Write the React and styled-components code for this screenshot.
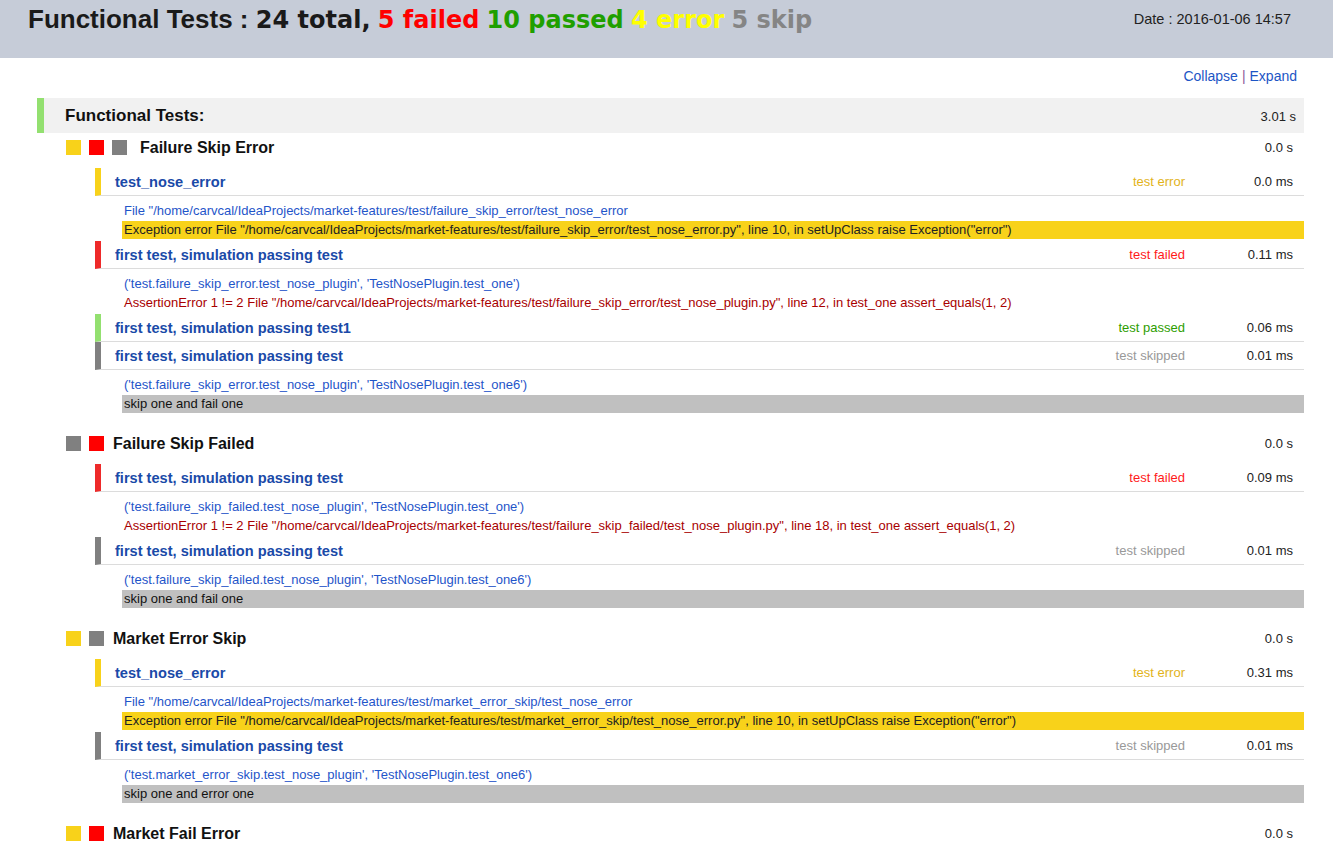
import React from 'react';
import styled, { createGlobalStyle } from 'styled-components';

const GlobalStyle = createGlobalStyle`
  html, body {
    margin: 0;
    padding: 0;
    background: #fff;
    overflow: hidden;
  }
  body {
    font-family: "Liberation Sans", Arial, sans-serif;
    color: #222;
  }
`;

const COLORS = {
  error: '#f8d21a',
  failed: '#ff0000',
  skip: '#808080',
  passed: '#93e070',
};

const BAR = {
  error: '#f8d21a',
  failed: '#ee2a2a',
  skipped: '#808080',
  passed: '#93e070',
};

const STATUS_TEXT = {
  error: '#e2b31a',
  failed: '#ff1a1a',
  passed: '#2e9e00',
  skipped: '#999999',
};

const groups = [
  {
    name: 'Failure Skip Error',
    marks: ['error', 'failed', 'skip'],
    time: '0.0 s',
    tests: [
      {
        name: 'test_nose_error',
        status: 'error',
        time: '0.0 ms',
        lines: [
          { kind: 'info', text: 'File "/home/carvcal/IdeaProjects/market-features/test/failure_skip_error/test_nose_error' },
          { kind: 'error', text: 'Exception error File "/home/carvcal/IdeaProjects/market-features/test/failure_skip_error/test_nose_error.py", line 10, in setUpClass raise Exception("error")' },
        ],
      },
      {
        name: 'first test, simulation passing test',
        status: 'failed',
        time: '0.11 ms',
        lines: [
          { kind: 'info', text: "('test.failure_skip_error.test_nose_plugin', 'TestNosePlugin.test_one')" },
          { kind: 'failed', text: 'AssertionError 1 != 2 File "/home/carvcal/IdeaProjects/market-features/test/failure_skip_error/test_nose_plugin.py", line 12, in test_one assert_equals(1, 2)' },
        ],
      },
      { name: 'first test, simulation passing test1', status: 'passed', time: '0.06 ms' },
      {
        name: 'first test, simulation passing test',
        status: 'skipped',
        time: '0.01 ms',
        lines: [
          { kind: 'info', text: "('test.failure_skip_error.test_nose_plugin', 'TestNosePlugin.test_one6')" },
          { kind: 'skip', text: 'skip one and fail one' },
        ],
      },
    ],
  },
  {
    name: 'Failure Skip Failed',
    marks: ['skip', 'failed'],
    time: '0.0 s',
    tests: [
      {
        name: 'first test, simulation passing test',
        status: 'failed',
        time: '0.09 ms',
        lines: [
          { kind: 'info', text: "('test.failure_skip_failed.test_nose_plugin', 'TestNosePlugin.test_one')" },
          { kind: 'failed', text: 'AssertionError 1 != 2 File "/home/carvcal/IdeaProjects/market-features/test/failure_skip_failed/test_nose_plugin.py", line 18, in test_one assert_equals(1, 2)' },
        ],
      },
      {
        name: 'first test, simulation passing test',
        status: 'skipped',
        time: '0.01 ms',
        lines: [
          { kind: 'info', text: "('test.failure_skip_failed.test_nose_plugin', 'TestNosePlugin.test_one6')" },
          { kind: 'skip', text: 'skip one and fail one' },
        ],
      },
    ],
  },
  {
    name: 'Market Error Skip',
    marks: ['error', 'skip'],
    time: '0.0 s',
    tests: [
      {
        name: 'test_nose_error',
        status: 'error',
        time: '0.31 ms',
        lines: [
          { kind: 'info', text: 'File "/home/carvcal/IdeaProjects/market-features/test/market_error_skip/test_nose_error' },
          { kind: 'error', text: 'Exception error File "/home/carvcal/IdeaProjects/market-features/test/market_error_skip/test_nose_error.py", line 10, in setUpClass raise Exception("error")' },
        ],
      },
      {
        name: 'first test, simulation passing test',
        status: 'skipped',
        time: '0.01 ms',
        lines: [
          { kind: 'info', text: "('test.market_error_skip.test_nose_plugin', 'TestNosePlugin.test_one6')" },
          { kind: 'skip', text: 'skip one and error one' },
        ],
      },
    ],
  },
  {
    name: 'Market Fail Error',
    marks: ['error', 'failed'],
    time: '0.0 s',
    tests: [],
  },
];

const App = () => (
  <>
    <GlobalStyle />
    <Header>
      <Title>
        Functional Tests : <Count>24 total,</Count> <Count color="#ff0000">5 failed</Count>{' '}
        <Count color="#1f9f00">10 passed</Count> <Count color="#ffff00">4 error</Count>{' '}
        <Count color="#858585">5 skip</Count>
      </Title>
      <DateLabel>Date : 2016-01-06 14:57</DateLabel>
    </Header>

    <Page>
      <Toolbar>
        <ToolLink>Collapse</ToolLink>
        <Sep>|</Sep>
        <ToolLink>Expand</ToolLink>
      </Toolbar>

      <SuiteHeader>
        <SuiteName>Functional Tests:</SuiteName>
        <SmallTime>3.01 s</SmallTime>
      </SuiteHeader>

      {groups.map((group) => (
        <Group key={group.name}>
          <GroupHeader>
            <Marks spacing={group.marks.length > 2 ? 13 : 9}>
              {group.marks.map((m, i) => (
                <Mark key={i} color={COLORS[m]} />
              ))}
            </Marks>
            <GroupName>{group.name}</GroupName>
            <SmallTime>{group.time}</SmallTime>
          </GroupHeader>

          <TestList>
            {group.tests.map((test, i) => (
              <div key={i}>
                <TestRow bar={BAR[test.status]}>
                  <TestName>{test.name}</TestName>
                  <Status color={STATUS_TEXT[test.status]}>test {test.status}</Status>
                  <TestTime>{test.time}</TestTime>
                </TestRow>
                {test.lines && (
                  <Details>
                    {test.lines.map((line, j) => (
                      <Line key={j} kind={line.kind}>
                        {line.text}
                      </Line>
                    ))}
                  </Details>
                )}
              </div>
            ))}
          </TestList>
        </Group>
      ))}
    </Page>
  </>
);

const Header = styled.header`
  height: 58px;
  background: #c6ccd8;
  display: flex;
  justify-content: space-between;
  align-items: flex-start;
  padding: 0 42px 0 28px;
`;

const Title = styled.h1`
  margin: 3px 0 0;
  font-size: 26px;
  line-height: 32px;
  font-weight: bold;
  color: #1a1a1a;
  white-space: nowrap;
`;

const Count = styled.span`
  font-family: "DejaVu Sans", Verdana, sans-serif;
  font-size: 24px;
  color: ${(p) => p.color || '#1a1a1a'};
`;

const DateLabel = styled.div`
  margin-top: 11px;
  font-size: 14.5px;
  line-height: 16px;
  color: #222;
`;

const Page = styled.main`
  padding: 0 29px 40px 37px;
`;

const Toolbar = styled.div`
  display: flex;
  justify-content: flex-end;
  align-items: center;
  gap: 4px;
  padding: 9px 7px 0 0;
  height: 18px;
  margin-bottom: 13px;
  font-size: 14px;
`;

const ToolLink = styled.a`
  color: #1c55c5;
  cursor: pointer;
`;

const Sep = styled.span`
  color: #8a5a9a;
`;

const SuiteHeader = styled.div`
  height: 35px;
  display: flex;
  align-items: center;
  justify-content: space-between;
  background: #f1f1f1;
  border-left: 7px solid #93e070;
  padding: 1px 8px 0 21px;
  box-sizing: border-box;
`;

const SuiteName = styled.span`
  font-size: 17px;
  font-weight: bold;
  color: #111;
`;

const SmallTime = styled.span`
  font-size: 13px;
  color: #222;
`;

const Group = styled.section`
  margin: 1px 0 15px 29px;
`;

const GroupHeader = styled.div`
  height: 26px;
  display: flex;
  align-items: center;
  padding: 1px 11px 0 0;
  box-sizing: border-box;
  margin-bottom: 8px;
`;

const Marks = styled.div`
  display: flex;
  gap: 8px;
  margin-right: ${(p) => p.spacing}px;
`;

const Mark = styled.span`
  width: 15px;
  height: 15px;
  background: ${(p) => p.color};
`;

const GroupName = styled.h3`
  margin: 0;
  flex: 1;
  font-size: 16px;
  font-weight: bold;
  color: #111;
`;

const TestList = styled.div`
  margin-left: 29px;
`;

const TestRow = styled.div`
  height: 27px;
  display: flex;
  align-items: center;
  border-left: 6px solid ${(p) => p.bar};
  border-bottom: 1px solid #dcdcdc;
  padding: 0 11px 0 14px;
`;

const TestName = styled.span`
  flex: 1;
  font-size: 14.6px;
  font-weight: bold;
  color: #1a4aa8;
`;

const Status = styled.span`
  font-size: 13px;
  color: ${(p) => p.color};
`;

const TestTime = styled.span`
  width: 108px;
  text-align: right;
  font-size: 13px;
  color: #222;
`;

const LINE_STYLES = {
  info: 'color: #1f55c9;',
  failed: 'color: #a80000;',
  error: 'color: #222; background: #f8d21a;',
  skip: 'color: #111; background: #c0c0c0;',
};

const Details = styled.div`
  padding: 6px 0 2px 27px;
`;

const Line = styled.div`
  font-size: 13px;
  line-height: 18px;
  padding-left: 2px;
  white-space: nowrap;
  ${(p) => LINE_STYLES[p.kind]}

  & + & {
    margin-top: 1px;
  }
`;

export default App;
